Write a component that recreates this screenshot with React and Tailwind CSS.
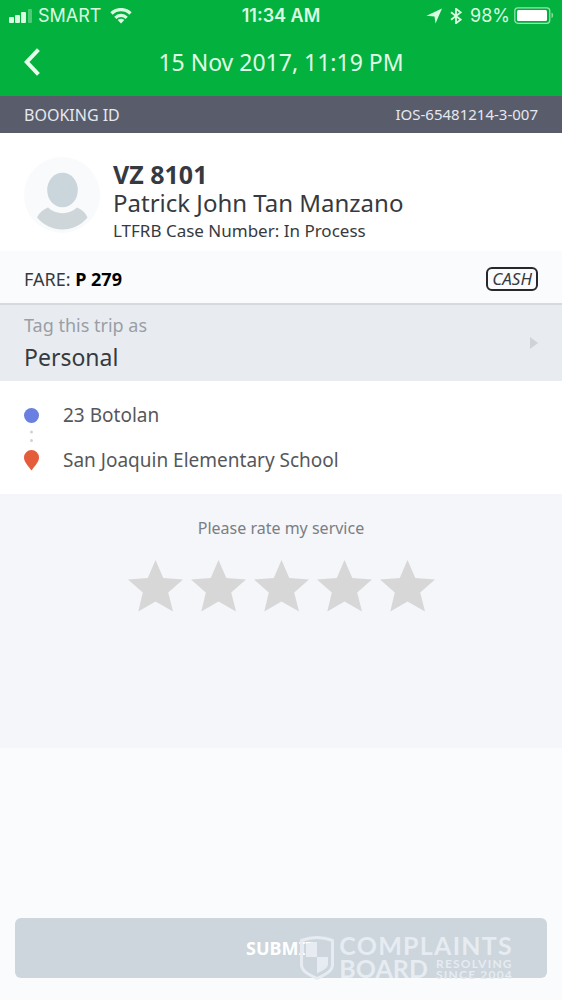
import React, { useState } from 'react';

const trip = {
  date: '15 Nov 2017, 11:19 PM',
  bookingId: 'IOS-65481214-3-007',
  plate: 'VZ 8101',
  driver: 'Patrick John Tan Manzano',
  caseNumber: 'In Process',
  fare: 'P 279',
  payment: 'CASH',
  tag: 'Personal',
  pickup: '23 Botolan',
  dropoff: 'San Joaquin Elementary School',
};

const StatusBar = () => (
  <div className="grid grid-cols-3 items-center h-8 px-2 text-lg leading-6 text-[#d9fbe0] font-['Inter',sans-serif]">
    <div className="flex items-center gap-1.5">
      <svg className="w-6 h-4" viewBox="0 0 24 16" fill="currentColor" aria-hidden="true">
        <rect x="1" y="9" width="5" height="6" rx="1" />
        <rect x="7" y="7" width="5" height="8" rx="1" />
        <rect x="13" y="4" width="5" height="11" rx="1" />
        <rect x="20" y="1" width="4" height="14" rx="1" opacity="0.35" />
      </svg>
      <span>SMART</span>
      <svg className="w-6 h-4 ml-0.5" viewBox="0 0 24 16" fill="none" stroke="currentColor" strokeWidth="3.2" aria-hidden="true">
        <path d="M2.500 5.500a13.400 13.400 0 0 1 19 0" />
        <path d="M6.300 9.800a8 8 0 0 1 11.400 0" />
        <path d="M12 15.500l-3.300-3.400a4.700 4.700 0 0 1 6.600 0z" fill="currentColor" stroke="none" />
      </svg>
    </div>
    <div className="text-center font-semibold whitespace-nowrap">11:34 AM</div>
    <div className="flex items-center justify-end gap-2">
      <svg className="w-4 h-4" viewBox="0 0 16 16" fill="currentColor" aria-hidden="true">
        <path d="M16 0.500L9.500 15.500 8.500 8.600 0.500 7.800z" />
      </svg>
      <svg className="w-3 h-4" viewBox="0 0 12 16" fill="none" stroke="currentColor" strokeWidth="1.800" aria-hidden="true">
        <path d="M1 4.200l9.600 7.400L6 15.200V.8l4.600 3.600L1 11.800" />
      </svg>
      <span>98%</span>
      <svg className="w-10 h-5 -ml-1 shrink-0" viewBox="0 0 40 20" aria-hidden="true">
        <rect x="0.8" y="1.8" width="35" height="15.500" rx="3" fill="none" stroke="currentColor" strokeWidth="1.2" opacity="0.7" />
        <rect x="3" y="4" width="30" height="11" rx="1.5" fill="#fff" />
        <path d="M37.500 6.500c2.200.8 2.200 4.800 0 5.600z" fill="currentColor" opacity="0.6" />
      </svg>
    </div>
  </div>
);

const Header = () => (
  <div className="grid grid-cols-[48px_1fr_48px] items-center h-16 pb-1">
    <button type="button" aria-label="Back" className="flex items-center justify-end h-12 pr-2">
      <svg className="w-4 h-7" viewBox="0 0 16 28" fill="none" stroke="#e6ffea" strokeWidth="4" aria-hidden="true">
        <path d="M14.400 1.600L2.800 14l11.600 12.400" />
      </svg>
    </button>
    <h1 className="text-center text-[23px] leading-8 text-[#e0fce4]">{trip.date}</h1>
  </div>
);

const StarButton = ({ value, filled, onClick }) => (
  <button type="button" aria-label={`${value} stars`} onClick={() => onClick(value)} className={filled ? 'text-amber-400' : 'text-[#d7d7d8]'}>
    <svg className="w-[55px] h-[52px]" viewBox="0 0 55 52" fill="currentColor" aria-hidden="true">
      <path d="M27.500 0L35.300 18 55 19.600 40.200 32.600 45 51.500 27.500 41.600 10.300 51.500 14.800 32.600 0 19.600 19.800 18z" />
    </svg>
  </button>
);

const Watermark = () => (
  <div className="absolute top-4 right-[34px] flex gap-1 text-[#e6ecf1] pointer-events-none font-['Lato',sans-serif]">
    <svg className="w-9 h-[46px]" viewBox="0 0 36 46" aria-hidden="true">
      <path d="M18 3.500c5 0 10 .8 15.500 3V31c0 6-6.500 9-15.500 13.500C9 40 2.500 37 2.500 31V6.500c5.500-2.200 10.500-3 15.500-3z" fill="none" stroke="currentColor" strokeWidth="3" strokeLinejoin="round" />
      <path d="M18 8c-4 0-8 .6-11 1.700V23h11zM18 23v16.500c6.500-3.300 11-5.500 11-9.500v-7z" fill="currentColor" />
    </svg>
    <div className="text-[25px] leading-[23px] font-bold">
      <div className="tracking-wider">COMPLAINTS</div>
      <div className="flex items-center justify-between">
        <span>BOARD</span>
        <span className="text-xs leading-[11px] tracking-widest">
          RESOLVING
          <br />
          SINCE 2004
        </span>
      </div>
    </div>
  </div>
);

const App = () => {
  const [rating, setRating] = useState(0);

  return (
    <div className="min-h-screen flex flex-col bg-[#fafbfd] text-[#363a40] font-['Noto_Sans',sans-serif]">
      <header className="bg-[#03b13f]">
        <StatusBar />
        <Header />
      </header>

      {/* Booking */}
      <div className="flex items-center justify-between h-[37px] px-6 bg-[#595d6b] text-base text-[#e6e8ef]">
        <span>BOOKING ID</span>
        <span className="text-[15px]">{trip.bookingId}</span>
      </div>

      {/* Driver */}
      <section className="flex items-start gap-3 px-6 pt-6 pb-1 bg-white">
        <svg className="w-[76px] h-[76px] shrink-0" viewBox="0 0 76 76" aria-hidden="true">
          <circle cx="38" cy="38" r="38" fill="#f8fafc" />
          <ellipse cx="38.500" cy="33" rx="15.300" ry="17.300" fill="#cbd5dc" />
          <path d="M24 50.500c8 7.500 21 7.500 29 0 5 2 8.500 5.500 10.500 10-13 16-37 16-50.500 0 2-4.500 6-8 11-10z" fill="#cfd6da" />
        </svg>
        <div className="pl-px">
          <h2 className="text-[25px] leading-[34px] font-bold">{trip.plate}</h2>
          <p className="text-2xl leading-6">{trip.driver}</p>
          <p className="text-[17px] leading-8">LTFRB Case Number: {trip.caseNumber}</p>
        </div>
      </section>

      {/* Fare */}
      <section className="flex items-center justify-between px-6 pt-4 pb-3 border-b-2 border-[#d6dadd]">
        <p className="text-lg leading-6">
          FARE: <span className="font-bold text-black">{trip.fare}</span>
        </p>
        <span className="px-1 border-2 border-[#27272c] rounded-md text-[17px] leading-5 italic">{trip.payment}</span>
      </section>

      {/* Tag */}
      <button type="button" className="flex items-center justify-between px-6 py-2 bg-[#e8ecf1] text-left">
        <span>
          <span className="block text-lg leading-6 text-[#9a9ea5]">Tag this trip as</span>
          <span className="block pt-1 text-[23px] leading-8">{trip.tag}</span>
        </span>
        <svg className="w-2 h-3" viewBox="0 0 8 12" fill="#cdd3d9" aria-hidden="true">
          <path d="M0 0l8 6-8 6z" />
        </svg>
      </button>

      {/* Route */}
      <section className="flex gap-[23px] px-6 py-5 bg-white text-[19px] leading-7 text-[#56575a]">
        <svg className="w-4 h-[70px]" viewBox="0 0 16 70" aria-hidden="true">
          <circle cx="7.500" cy="14.500" r="7.500" fill="#6a80e0" />
          <circle cx="7.500" cy="31" r="1.500" fill="#d0d2d4" />
          <circle cx="7.500" cy="39.500" r="1.500" fill="#d0d2d4" />
          <path d="M7.500 49a7.500 7.500 0 0 1 7.500 7.500c0 4.500-4 8-7.500 13C4 64.500 0 61 0 56.500A7.500 7.500 0 0 1 7.500 49z" fill="#e55c3a" />
        </svg>
        <div className="flex flex-col gap-[17px]">
          <p>{trip.pickup}</p>
          <p>{trip.dropoff}</p>
        </div>
      </section>

      {/* Rating */}
      <section className="flex flex-col items-center gap-5 pt-[22px] pb-[136px] bg-[#f5f6fa]">
        <p className="text-base text-[#7b7e84]">Please rate my service</p>
        <div className="flex gap-2">
          {[1, 2, 3, 4, 5].map((value) => (
            <StarButton key={value} value={value} filled={value <= rating} onClick={setRating} />
          ))}
        </div>
      </section>

      <footer className="mt-auto px-[15px] pb-[22px]">
        <div className="relative">
          <button type="button" className="w-full h-[60px] rounded-md bg-[#ccd6dc] text-lg font-bold text-white">
            SUBMIT
          </button>
          <Watermark />
        </div>
      </footer>
    </div>
  );
};

export default App;
